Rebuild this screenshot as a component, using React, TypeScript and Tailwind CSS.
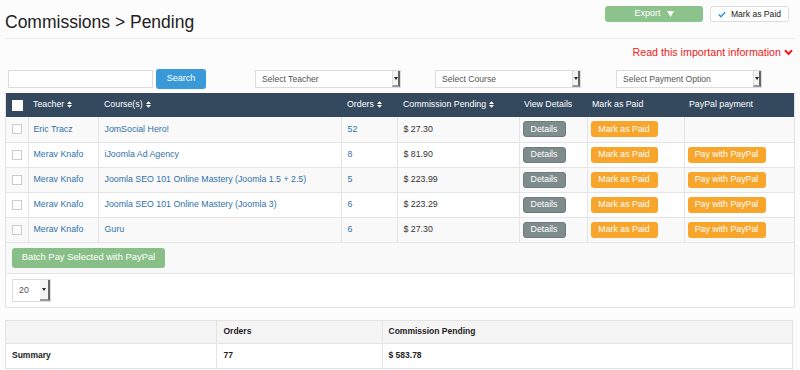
import React from 'react';

const rows = [
  { teacher: 'Eric Tracz', course: 'JomSocial Hero!', orders: '52', amount: '$ 27.30', paypal: false },
  { teacher: 'Merav Knafo', course: 'iJoomla Ad Agency', orders: '8', amount: '$ 81.90', paypal: true },
  { teacher: 'Merav Knafo', course: 'Joomla SEO 101 Online Mastery (Joomla 1.5 + 2.5)', orders: '5', amount: '$ 223.99', paypal: true },
  { teacher: 'Merav Knafo', course: 'Joomla SEO 101 Online Mastery (Joomla 3)', orders: '6', amount: '$ 223.29', paypal: true },
  { teacher: 'Merav Knafo', course: 'Guru', orders: '6', amount: '$ 27.30', paypal: true },
];

function SortIcon() {
  return (
    <svg width="5" height="7" viewBox="0 0 6 8" className="inline-block ml-[3px] -mt-px">
      <path d="M0 3.3 L3 0 L6 3.3 Z M0 4.7 L3 8 L6 4.7 Z" fill="#fff" />
    </svg>
  );
}

function FakeSelect({ label, className }: { label: string; className: string }) {
  return (
    <div className={`flex h-[18px] items-stretch border border-[#dcdcdc] bg-white ${className}`}>
      <span className="flex-1 pl-[6px] text-[8.6px] leading-[16px] text-[#555]">{label}</span>
      <span className="flex w-[8px] items-center justify-center border-l border-[#ddd] border-r-2 border-b-2 border-r-[#666] border-b-[#999] bg-[#f4f4f4]">
        <svg width="4" height="3" viewBox="0 0 4 3"><path d="M0 0 H4 L2 3 Z" fill="#222" /></svg>
      </span>
    </div>
  );
}

export default function App() {
  return (
    <div className="w-[800px] h-[370px] overflow-hidden bg-[#fcfcfc] font-['Liberation_Sans',Arial,sans-serif] text-[#333]">
      {/* header */}
      <div className="flex h-[38px] items-start justify-between px-[5px]">
        <h1 className="mt-[11px] text-[17.5px] leading-[22px] text-[#222]">Commissions &gt; Pending</h1>
        <div className="mt-[6px] flex gap-[7px] pr-[6px]">
          <button className="flex h-[16px] w-[98px] items-center justify-center gap-[6px] rounded-[3px] bg-[#8cc38c] text-[9px] text-white">
            Export
            <svg width="7" height="6" viewBox="0 0 8 7"><path d="M0 0 H8 L4 7 Z" fill="#fff" /></svg>
          </button>
          <button className="flex h-[16px] w-[79px] items-center justify-center gap-[5px] rounded-[3px] border border-[#ddd] bg-white text-[8.6px] text-[#222]">
            <svg width="8" height="7" viewBox="0 0 9 7"><path d="M1 3.5 L3.3 6 L8 1" stroke="#2f8ee0" strokeWidth="1.6" fill="none" /></svg>
            Mark as Paid
          </button>
        </div>
      </div>
      <div className="mx-[5px] h-px bg-[#ececec]" />

      <div className="mt-[6px] flex h-[14px] justify-end pr-[7px]">
        <span className="flex items-center gap-[3px] text-[10.7px] text-[#ee2020]">
          Read this important information
          <svg width="9" height="7" viewBox="0 0 9 7"><path d="M1 1.2 L4.5 5 L8 1.2" stroke="#ee2020" strokeWidth="2.2" fill="none" /></svg>
        </span>
      </div>

      {/* filters */}
      <div className="mt-[10px] flex h-[20px] items-center pl-[8px]">
        <input className="h-[18px] w-[145px] border border-[#dcdcdc] bg-white" />
        <button className="ml-[3px] h-[20px] w-[50px] rounded-[3px] bg-[#3a9ad9] text-[9px] text-white">Search</button>
        <FakeSelect label="Select Teacher" className="ml-[49px] w-[146px]" />
        <FakeSelect label="Select Course" className="ml-[34px] w-[146px]" />
        <FakeSelect label="Select Payment Option" className="ml-[35px] w-[146px]" />
      </div>

      {/* main table */}
      <div className="mx-[5px] mt-[4px] border border-[#e3e3e3] border-t-0">
        <table className="w-full border-collapse text-[8.8px]">
          <colgroup>
            <col className="w-[22px]" />
            <col className="w-[70px]" />
            <col className="w-[243px]" />
            <col className="w-[56px]" />
            <col className="w-[122px]" />
            <col className="w-[68px]" />
            <col className="w-[97px]" />
            <col />
          </colgroup>
          <thead>
            <tr className="h-[24px] bg-[#34495e] text-left text-white">
              <th className="pl-[6px] font-normal">
                <span className="block h-[11px] w-[11px] bg-white" />
              </th>
              <th className="pl-[5px] font-normal">Teacher<SortIcon /></th>
              <th className="pl-[6px] font-normal">Course(s)<SortIcon /></th>
              <th className="pl-[6px] font-normal">Orders<SortIcon /></th>
              <th className="pl-[6px] font-normal">Commission Pending<SortIcon /></th>
              <th className="pl-[5px] font-normal">View Details</th>
              <th className="pl-[5px] font-normal">Mark as Paid</th>
              <th className="pl-[5px] font-normal">PayPal payment</th>
            </tr>
          </thead>
          <tbody>
            {rows.map((r, i) => (
              <tr key={i} className={`h-[25px] ${i % 2 === 0 ? 'bg-[#f9f9f9]' : 'bg-white'}`}>
                <td className="border-b border-r border-[#e5e5e5] pl-[6px]">
                  <span className="block h-[10px] w-[10px] border border-[#ccc] bg-white" />
                </td>
                <td className="border-b border-r border-[#e5e5e5] pl-[5px] text-[#3071a9]">{r.teacher}</td>
                <td className="border-b border-r border-[#e5e5e5] pl-[6px] text-[#3071a9]">{r.course}</td>
                <td className="border-b border-r border-[#e5e5e5] pl-[6px] text-[#3071a9]">{r.orders}</td>
                <td className="border-b border-r border-[#e5e5e5] pl-[6px] text-[#333]">{r.amount}</td>
                <td className="border-b border-r border-[#e5e5e5] pl-[3px]">
                  <span className="flex h-[16px] w-[43px] items-center justify-center rounded-[3px] border border-[#6f7b7b] bg-[#7f8c8d] text-white">Details</span>
                </td>
                <td className="border-b border-r border-[#e5e5e5] pl-[3px]">
                  <span className="flex h-[16px] w-[67px] items-center justify-center rounded-[3px] bg-[#f8a52c] text-white">Mark as Paid</span>
                </td>
                <td className="border-b border-[#e5e5e5] pl-[3px]">
                  {r.paypal && (
                    <span className="flex h-[16px] w-[78px] items-center justify-center rounded-[3px] bg-[#f8a52c] text-white">Pay with PayPal</span>
                  )}
                </td>
              </tr>
            ))}
          </tbody>
        </table>
        <div className="flex h-[31px] items-center border-b border-[#e5e5e5] bg-[#f9f9f9] pl-[6px]">
          <button className="h-[20px] w-[153px] whitespace-nowrap rounded-[3px] bg-[#88bf88] text-[9.4px] text-white">Batch Pay Selected with PayPal</button>
        </div>
        <div className="flex h-[33px] items-center bg-white pl-[6px]">
          <div className="flex h-[23px] w-[39px] items-stretch border border-[#dcdcdc] bg-white">
            <span className="flex-1 pl-[6px] text-[8.8px] leading-[21px] text-[#555]">20</span>
            <span className="flex w-[10px] items-center justify-center border-r-2 border-b-2 border-r-[#666] border-b-[#999] bg-[#f4f4f4]">
              <svg width="4" height="3" viewBox="0 0 4 3"><path d="M0 0 H4 L2 3 Z" fill="#222" /></svg>
            </span>
          </div>
        </div>
      </div>

      {/* summary */}
      <div className="ml-[5px] mr-[7px] mt-[12px] border border-[#e3e3e3]">
        <table className="w-full border-collapse text-[8.5px] font-bold text-[#222]">
          <colgroup>
            <col className="w-[210px]" />
            <col className="w-[166px]" />
            <col />
          </colgroup>
          <tbody>
            <tr className="h-[23px] bg-[#f5f5f5]">
              <td className="border-b border-r border-[#e5e5e5]" />
              <td className="border-b border-r border-[#e5e5e5] pl-[7px]">Orders</td>
              <td className="border-b border-[#e5e5e5] pl-[6px]">Commission Pending</td>
            </tr>
            <tr className="h-[24px] bg-white">
              <td className="border-r border-[#e5e5e5] pl-[6px]">Summary</td>
              <td className="border-r border-[#e5e5e5] pl-[7px]">77</td>
              <td className="pl-[6px]">$ 583.78</td>
            </tr>
          </tbody>
        </table>
      </div>
    </div>
  );
}
